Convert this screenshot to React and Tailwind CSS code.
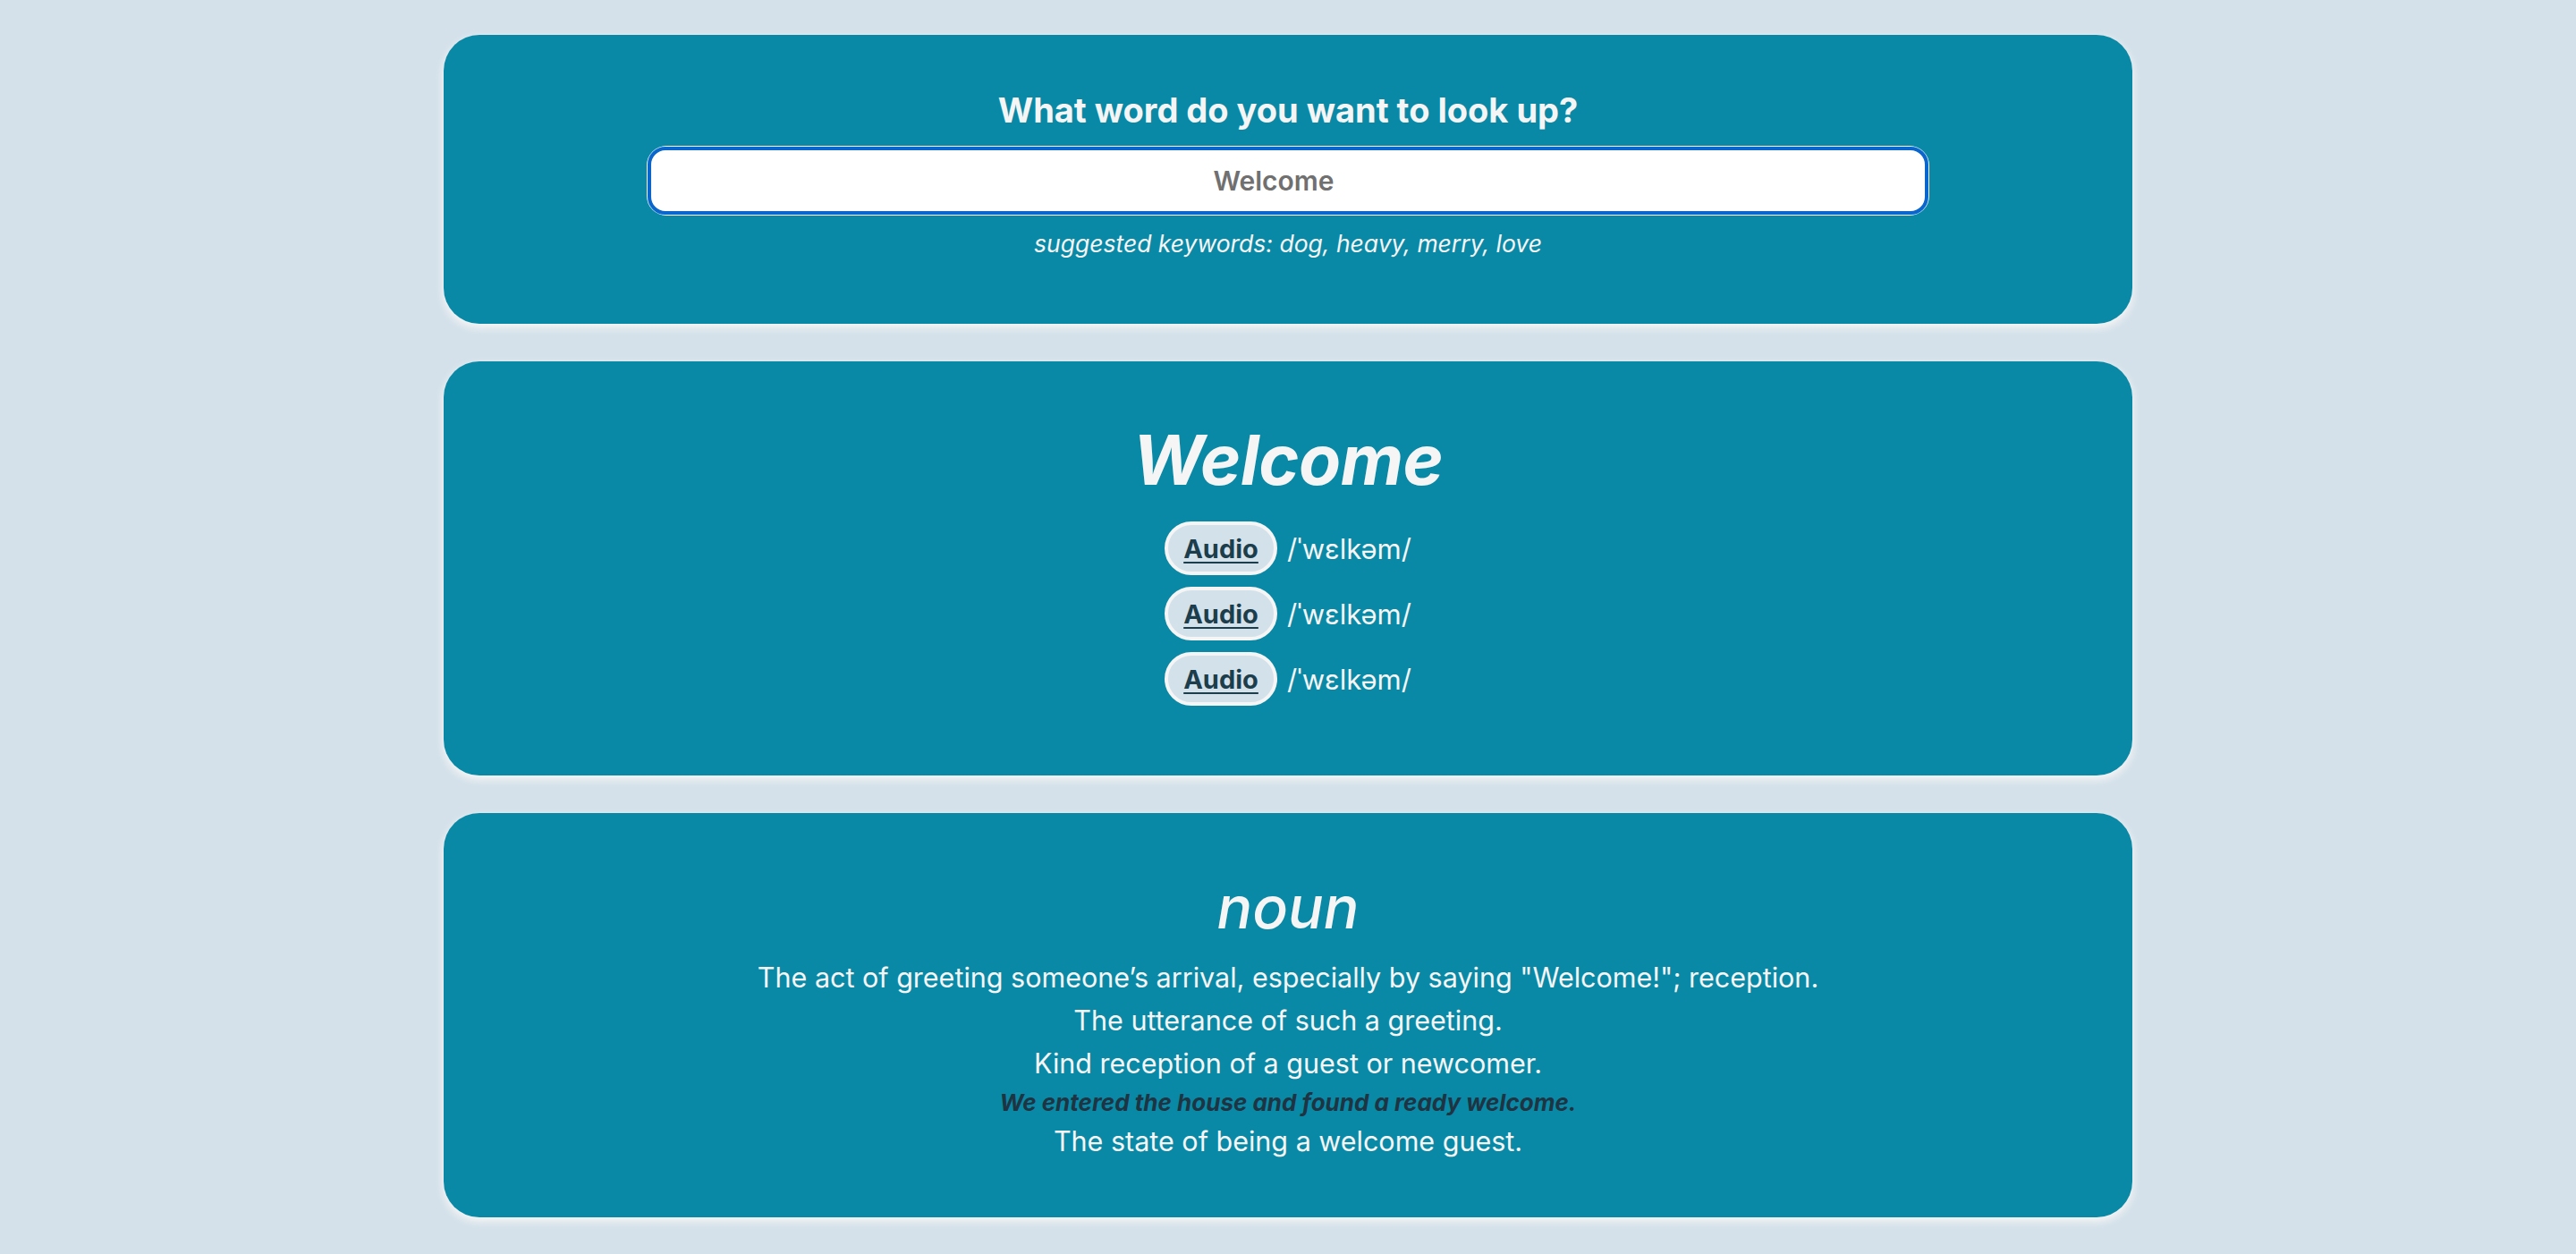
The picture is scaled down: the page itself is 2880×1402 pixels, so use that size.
import React from "react";

const font = { fontFamily: "Inter, 'Noto Sans', sans-serif" };

function Card({ children, className = "" }) {
  return (
    <section
      className={
        "w-[1888px] rounded-[40px] bg-[#0a89a6] text-[#f5f5f5] flex flex-col items-center shadow-[0_4px_8px_1px_#f5f5f5] " +
        className
      }
    >
      {children}
    </section>
  );
}

function AudioRow() {
  return (
    <div className="flex items-center gap-[11px] h-[60px]">
      <button className="h-[60px] w-[126px] rounded-full bg-[#d3e1ea] border-[4px] border-[#f5f5f5] text-[29px] font-bold text-[#1c3d4c] underline underline-offset-[4px] decoration-[2px] leading-none flex items-center justify-center">
        Audio
      </button>
      <span className="text-[31px] leading-none text-[#f5f5f5]">/ˈwɛlkəm/</span>
    </div>
  );
}

export default function App() {
  return (
    <div className="min-h-[1402px] w-full bg-[#d4e1ea] flex flex-col items-center pt-[39px] gap-[42px]" style={font}>
      <Card className="pt-[61px] pb-[74px]">
        <h2 className="text-[38px] leading-[46px] font-bold">What word do you want to look up?</h2>
        <div className="mt-[17px] rounded-[22px] p-[1px] bg-white">
          <input
            readOnly
            value="Welcome"
            className="w-[1432px] h-[76px] rounded-[20px] border-[4px] border-[#0a66cc] bg-white text-center text-[30px] font-semibold text-[#707070] outline-none pr-[32px]"
            style={font}
          />
        </div>
        <p className="mt-[15px] text-[26.5px] leading-[32px] italic">suggested keywords: dog, heavy, merry, love</p>
      </Card>

      <Card className="pt-[62px] pb-[78px]">
        <h1 className="text-[77px] leading-[96px] font-bold italic tracking-[-0.5px]">Welcome</h1>
        <div className="mt-[21px] flex flex-col items-start gap-[13px]">
          <AudioRow />
          <AudioRow />
          <AudioRow />
        </div>
      </Card>

      <Card className="pt-[65px] pb-[61px]">
        <h3 className="text-[66px] leading-[80px] italic font-medium">noun</h3>
        <div className="mt-[15px] flex flex-col items-center text-[30.5px] leading-[48px]">
          <p>The act of greeting someone’s arrival, especially by saying "Welcome!"; reception.</p>
          <p>The utterance of such a greeting.</p>
          <p>Kind reception of a guest or newcomer.</p>
          <p className="text-[26px] leading-[39px] italic font-bold text-[#1e3442]">We entered the house and found a ready welcome.</p>
          <p>The state of being a welcome guest.</p>
        </div>
      </Card>
    </div>
  );
}
